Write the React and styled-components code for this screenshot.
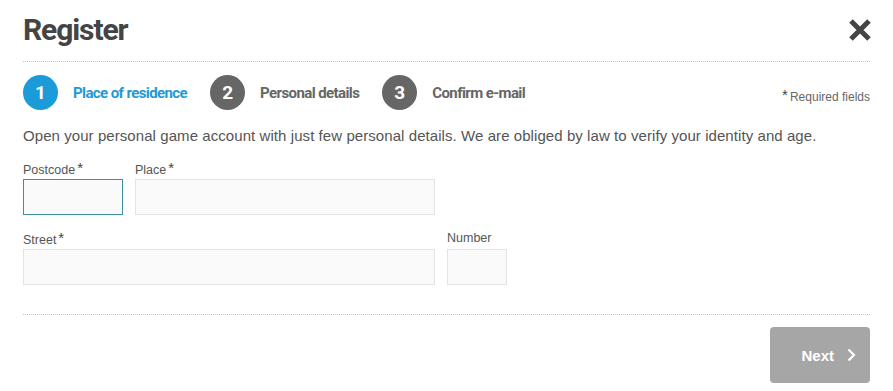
import React from 'react';
import styled, { createGlobalStyle } from 'styled-components';

const GlobalStyle = createGlobalStyle`
    html, body {
        margin: 0;
        padding: 0;
        background: #fff;
    }
    body {
        font-family: 'Liberation Sans', Arial, sans-serif;
        color: #555;
    }
`;

const headingFont = `'Roboto', 'DejaVu Sans Condensed', sans-serif`;

const Root = styled.div`
    padding: 0 23px;
    width: 893px;
    box-sizing: border-box;
`;

const Header = styled.div`
    display: flex;
    align-items: center;
    justify-content: space-between;
    height: 61px;
    border-bottom: 1px dotted #c4c4c4;
`;

const Title = styled.h1`
    margin: 0;
    font-family: ${headingFont};
    font-weight: 700;
    font-size: 30px;
    letter-spacing: -1.1px;
    color: #444;
    line-height: 1;
    padding-bottom: 2px;
`;

const CloseButton = styled.button`
    border: 0;
    background: none;
    padding: 0;
    width: 24px;
    height: 24px;
    margin-right: -2px;
    margin-top: -2px;
    display: flex;
    cursor: pointer;
`;

const StepsRow = styled.div`
    display: flex;
    align-items: center;
    margin-top: 13px;
    height: 35px;
`;

const Step = styled.div`
    display: flex;
    align-items: center;
    gap: 15px;
    margin-right: 23px;
`;

const StepNumber = styled.span`
    width: 35px;
    height: 35px;
    border-radius: 50%;
    background: ${(p) => (p.$active ? '#1b9bd7' : '#666')};
    color: #fff;
    display: flex;
    align-items: center;
    justify-content: center;
    font-family: ${headingFont};
    font-weight: 700;
    font-size: 19px;
`;

const StepLabel = styled.span`
    font-family: ${headingFont};
    font-weight: 700;
    font-size: 15px;
    letter-spacing: -0.6px;
    color: ${(p) => (p.$active ? '#1b9bd7' : '#666')};
`;

const Required = styled.span`
    margin-left: auto;
    font-size: 12px;
    color: #666;
    padding-top: 5px;
`;

const Star = styled.span`
    font-size: 15px;
    color: #444;
    margin-right: 2px;
    vertical-align: 1px;
`;

const Intro = styled.p`
    margin: 16px 0 0;
    font-size: 15px;
    line-height: 20px;
    letter-spacing: 0.07px;
    color: #555;
`;

const FormRow = styled.div`
    display: flex;
    gap: 12px;
    margin-top: ${(p) => p.$top}px;
`;

const Field = styled.div`
    display: flex;
    flex-direction: column;
    width: ${(p) => p.$width}px;
`;

const Label = styled.label`
    font-size: 12.5px;
    color: #555;
    height: 16px;
    line-height: 16px;
    margin-bottom: 3px;
    white-space: nowrap;
`;

const LabelStar = styled.span`
    font-size: 15px;
    color: #444;
    margin-left: 2px;
    vertical-align: 1px;
`;

const Input = styled.input`
    box-sizing: border-box;
    height: 36px;
    width: 100%;
    background: #fafafa;
    border: 1px solid ${(p) => (p.$focused ? '#3d8f9e' : '#e3e3e3')};
    outline: none;
    padding: 0 8px;
    font-size: 14px;
`;

const Footer = styled.div`
    margin-top: 29px;
    border-top: 1px dotted #c4c4c4;
    display: flex;
    justify-content: flex-end;
    padding-top: 12px;
`;

const NextButton = styled.button`
    width: 100px;
    height: 56px;
    border: 0;
    border-radius: 4px;
    background: #a6a6a6;
    color: #fff;
    font-family: 'Liberation Sans', Arial, sans-serif;
    font-weight: 700;
    font-size: 15px;
    display: flex;
    align-items: center;
    justify-content: flex-end;
    gap: 13px;
    padding: 0 14px 0 0;
    cursor: default;
`;

const CloseIcon = () => (
    <svg width="24" height="24" viewBox="0 0 24 24">
        <path d="M3 3 L21 21 M21 3 L3 21" stroke="#444" strokeWidth="5" strokeLinecap="butt" />
    </svg>
);

const Chevron = () => (
    <svg width="9" height="14" viewBox="0 0 9 14">
        <path d="M1.5 1.5 L7 7 L1.5 12.5" stroke="#fff" strokeWidth="2.2" fill="none" />
    </svg>
);

const steps = [
    { n: 1, label: 'Place of residence', active: true },
    { n: 2, label: 'Personal details' },
    { n: 3, label: 'Confirm e-mail' },
];

const App = () => (
    <Root>
        <GlobalStyle />
        <Header>
            <Title>Register</Title>
            <CloseButton aria-label="Close">
                <CloseIcon />
            </CloseButton>
        </Header>
        <StepsRow>
            {steps.map((s) => (
                <Step key={s.n}>
                    <StepNumber $active={s.active}>{s.n}</StepNumber>
                    <StepLabel $active={s.active}>{s.label}</StepLabel>
                </Step>
            ))}
            <Required>
                <Star>*</Star>Required fields
            </Required>
        </StepsRow>
        <Intro>
            Open your personal game account with just few personal details. We are obliged by law to verify your
            identity and age.
        </Intro>
        <FormRow $top={14}>
            <Field $width={100}>
                <Label>
                    Postcode<LabelStar>*</LabelStar>
                </Label>
                <Input $focused />
            </Field>
            <Field $width={300}>
                <Label>
                    Place<LabelStar>*</LabelStar>
                </Label>
                <Input />
            </Field>
        </FormRow>
        <FormRow $top={15}>
            <Field $width={412}>
                <Label>
                    Street<LabelStar>*</LabelStar>
                </Label>
                <Input />
            </Field>
            <Field $width={60}>
                <Label>Number</Label>
                <Input />
            </Field>
        </FormRow>
        <Footer>
            <NextButton>
                Next
                <Chevron />
            </NextButton>
        </Footer>
    </Root>
);

export default App;
